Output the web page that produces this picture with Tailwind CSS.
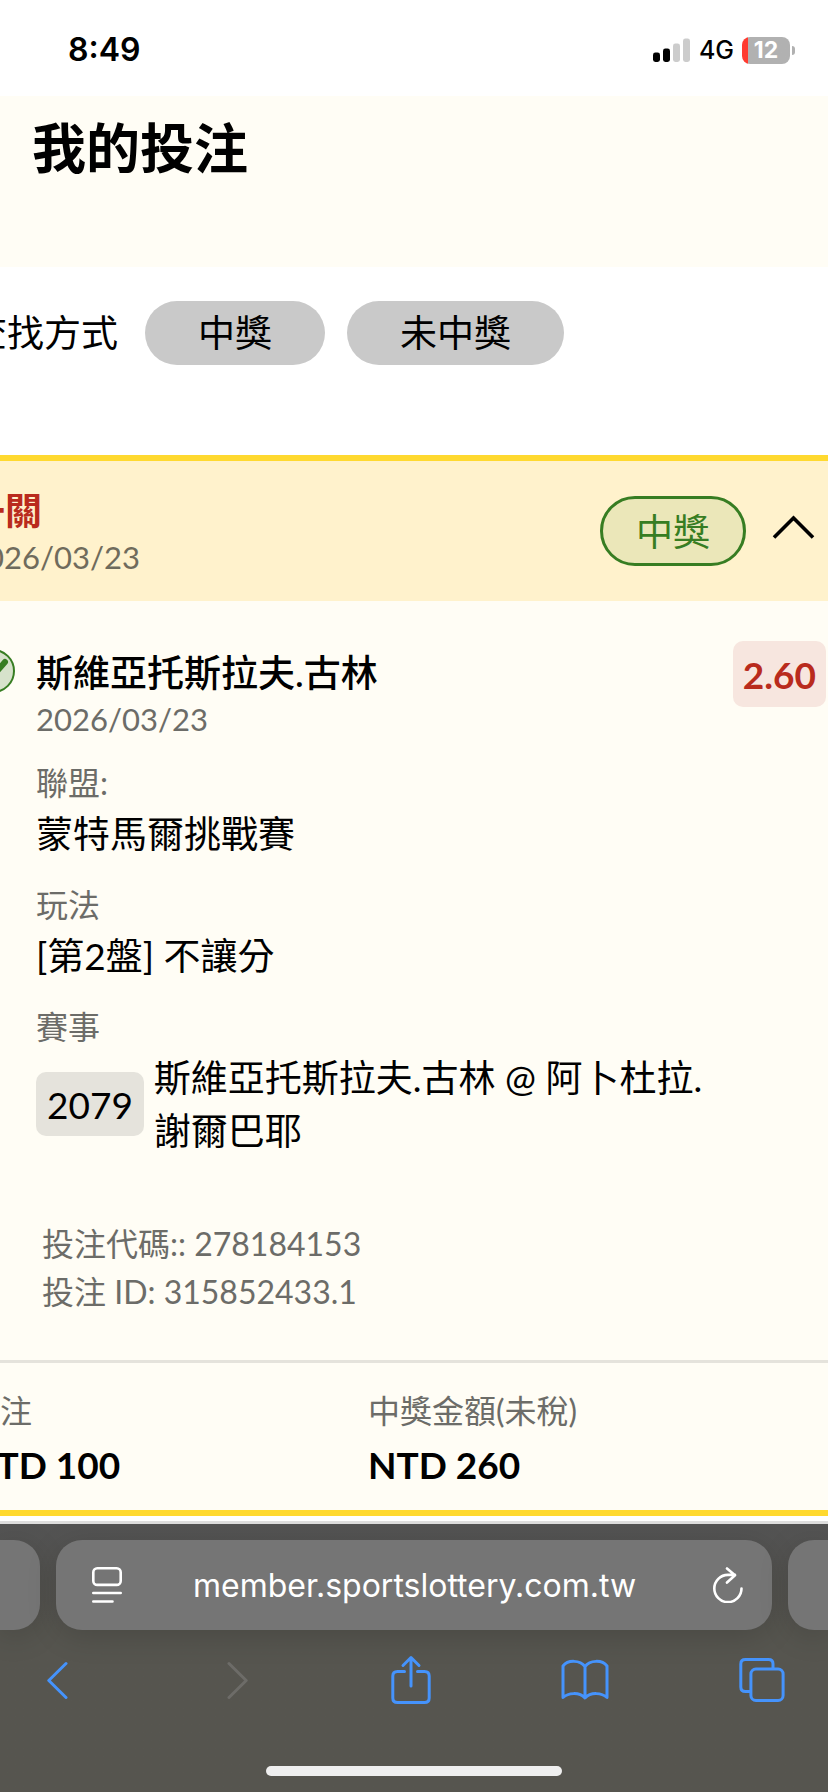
<!DOCTYPE html>
<html lang="zh-Hant">
<head>
    <meta charset="UTF-8">
    <meta name="viewport" content="width=device-width, initial-scale=1.0">
    <title>我的投注</title>
    <script src="https://cdn.jsdelivr.net/npm/@tailwindcss/browser@4"></script>
</head>
<body class="min-h-screen flex flex-col overflow-x-hidden bg-white text-black font-[Lato,'Noto_Sans_CJK_TC',sans-serif]">
    <!-- Status bar -->
    <div class="h-24 pl-[68px] pr-[33px] flex items-center justify-between font-[Inter,sans-serif]">
        <span class="text-[32px] leading-10 font-semibold pt-1">8:49</span>
        <div class="flex items-center gap-2 pt-1">
            <svg class="w-[38px] h-6" viewBox="0 0 38 24">
                <rect x="0" y="14.5" width="7" height="9.5" rx="2.4" fill="#000"/>
                <rect x="10" y="10.5" width="7" height="13.5" rx="2.4" fill="#000"/>
                <rect x="20" y="5.5" width="7" height="18.5" rx="2.4" fill="#ccc"/>
                <rect x="30" y="0.5" width="7" height="23.5" rx="2.4" fill="#ccc"/>
            </svg>
            <span class="text-[25px] leading-8 font-medium">4G</span>
            <div class="flex items-center gap-[2px]">
                <div class="w-12 h-[27px] rounded-[8px] bg-linear-to-r from-[#ff3b30] from-[6px] to-[#b1b1b1] to-[6px] flex items-center justify-center">
                    <span class="text-[23px] leading-[27px] font-bold text-white">12</span>
                </div>
                <div class="w-[3px] h-[9px] rounded-r-full bg-[#b1b1b1]"></div>
            </div>
        </div>
    </div>

    <header class="h-[171px] px-8 pt-[13px] bg-[#fffdf5]">
        <h1 class="text-[54px] leading-[80px] font-bold">我的投注</h1>
    </header>

    <!-- Filters -->
    <div class="-ml-[30px] h-[188px] pt-[34px] flex items-start text-[37px] leading-[64px]">
        <span class="mr-[27px] shrink-0">查找方式</span>
        <div class="flex gap-[22px]">
            <button class="h-16 px-[53px] rounded-full bg-[#c9c9c9]">中獎</button>
            <button class="h-16 px-[53px] rounded-full bg-[#c9c9c9]">未中獎</button>
        </div>
    </div>

    <!-- Bet slip -->
    <article class="-ml-8 border-y-[6px] border-[#ffd92f] bg-[#fffdf5] text-[37px] leading-[53px]">
        <div class="h-[140px] pr-[13px] flex items-center justify-between bg-[#fff2cc]">
            <div class="pt-[3px]">
                <h2 class="leading-[48px] font-bold text-[#b92b1d]">一關</h2>
                <p class="text-[31px] leading-[44px] text-[#6f6b5c]">2026/03/23</p>
            </div>
            <div class="flex items-center gap-[26px]">
                <span class="h-[70px] px-[33px] flex items-center rounded-full border-3 border-[#377d22] bg-[#ebe7b9] text-[#377d22]">中獎</span>
                <button aria-label="收合">
                    <svg class="w-[43px] h-6 mb-2" viewBox="0 0 43 24" fill="none" stroke="#000" stroke-width="3.6">
                        <path d="M2 22.5 21.5 3 41 22.5"/>
                    </svg>
                </button>
            </div>
        </div>

        <div class="pl-[3px] pr-[2px] pt-12 flex items-start">
            <svg class="w-11 h-11 mr-[21px] shrink-0" viewBox="0 0 44 44">
                <circle cx="22" cy="22" r="21" fill="#d7e2cb" stroke="#377d22" stroke-width="2"/>
                <path d="M12 23 20 29 34 13" fill="none" stroke="#377d22" stroke-width="6" stroke-linecap="round" stroke-linejoin="round"/>
            </svg>
            <div class="flex-1">
                <h3 class="leading-[48px] font-medium">斯維亞托斯拉夫.古林</h3>
                <p class="text-[31px] leading-[44px] text-[#6c6c68]">2026/03/23</p>
                <dl class="mt-[18px]">
                    <dt class="text-[32px] leading-[48px] text-[#6c6c68]">聯盟:</dt>
                    <dd class="mb-[21px]">蒙特馬爾挑戰賽</dd>
                    <dt class="text-[32px] leading-[48px] text-[#6c6c68]">玩法</dt>
                    <dd class="mb-[21px]">[第2盤] 不讓分</dd>
                    <dt class="text-[32px] leading-[48px] text-[#6c6c68]">賽事</dt>
                    <dd class="flex items-center gap-[10px]">
                        <span class="h-16 px-[11px] flex items-center rounded-[10px] bg-[#e5e3dc]">2079</span>
                        <span class="max-w-[560px]">斯維亞托斯拉夫.古林 @ 阿卜杜拉.謝爾巴耶</span>
                    </dd>
                </dl>
            </div>
            <span class="-mt-2 -ml-[94px] h-[66px] px-[10px] flex items-center rounded-[10px] bg-[#f7e6df] font-bold text-[#b92b1d]">2.60</span>
        </div>

        <div class="mt-[63px] mb-11 pl-[74px] text-[32px] leading-[48px] text-[#6c6c68]">
            <p>投注代碼:: 278184153</p>
            <p>投注 ID: 315852433.1</p>
        </div>

        <dl class="pt-[24px] pb-[19px] flex border-t-3 border-[#e5e3dc]">
            <div class="w-[400px]">
                <dt class="text-[32px] leading-[48px] text-[#6c6c68]">投注</dt>
                <dd class="mt-[3px] font-bold">NTD 100</dd>
            </div>
            <div>
                <dt class="text-[32px] leading-[48px] text-[#6c6c68]">中獎金額(未稅)</dt>
                <dd class="mt-[3px] font-bold">NTD 260</dd>
            </div>
        </dl>
    </article>

    <!-- Browser toolbar -->
    <footer class="mt-[5px] border-t-3 border-[#dedede] flex-1 flex flex-col bg-linear-to-b from-[#535353] to-[#56554f] to-40% font-[Inter,sans-serif]">
        <div class="mt-4 h-[90px] flex gap-4">
            <div class="w-10 rounded-r-[26px] bg-[#757575] shadow-[0_6px_30px_rgba(0,0,0,0.15)]"></div>
            <div class="flex-1 pl-9 pr-[29px] flex items-center rounded-[26px] bg-[#757575] shadow-[0_6px_30px_rgba(0,0,0,0.15)]">
                <button aria-label="網頁選單">
                    <svg class="w-[30px] h-9" viewBox="0 0 30 36" fill="none" stroke="#fff" stroke-width="2.6" stroke-linecap="round">
                        <rect x="1.3" y="1.3" width="27.4" height="16.6" rx="4"/>
                        <path d="M1.3 26H28.7M1.3 34.5H20.5"/>
                    </svg>
                </button>
                <input type="text" aria-label="網址" value="member.sportslottery.com.tw" class="flex-1 min-w-0 h-12 pr-[6px] text-center text-[32px] leading-10 text-white bg-transparent">
                <button aria-label="重新載入">
                    <svg class="w-[30px] h-9" viewBox="0 0 30 36" fill="none" stroke="#fff" stroke-width="2.6" stroke-linecap="round" stroke-linejoin="round">
                        <path d="M28.5 21.5A13.6 13.6 0 1 1 14.9 7.9H22M14 1.5 22 8.2 14 15.5"/>
                    </svg>
                </button>
            </div>
            <div class="w-10 rounded-l-[26px] bg-[#757575] shadow-[0_6px_30px_rgba(0,0,0,0.15)]"></div>
        </div>

        <nav class="mt-6 pl-[46px] pr-[43px] h-[52px] flex items-center justify-between text-[#4593fc]">
            <button aria-label="上一頁">
                <svg class="w-[22px] h-[38px]" viewBox="0 0 22 38" fill="none" stroke="currentColor" stroke-width="3" stroke-linecap="round" stroke-linejoin="round">
                    <path d="M20 2.5 2.8 19.5 20 36.5"/>
                </svg>
            </button>
            <button aria-label="下一頁" disabled class="text-[#6d6c68] ml-[29px]">
                <svg class="w-[22px] h-[38px]" viewBox="0 0 22 38" fill="none" stroke="currentColor" stroke-width="3" stroke-linecap="round" stroke-linejoin="round">
                    <path d="M2 2.5 19.2 19.5 2 36.5"/>
                </svg>
            </button>
            <button aria-label="分享" class="ml-[11px]">
                <svg class="w-[40px] h-[50px]" viewBox="0 0 40 50" fill="none" stroke="currentColor" stroke-width="3" stroke-linecap="round" stroke-linejoin="round">
                    <path d="M13.5 16.5H6.5Q1.8 16.5 1.8 21V43Q1.8 47.5 6.5 47.5H33.5Q38.2 47.5 38.2 43V21Q38.2 16.5 33.5 16.5H26.5M20 31V3M12 10.5 20 2.5 28 10.5"/>
                </svg>
            </button>
            <button aria-label="書籤">
                <svg class="w-[48px] h-[42px]" viewBox="0 0 48 42" fill="none" stroke="currentColor" stroke-width="3" stroke-linejoin="round">
                    <path d="M24 7.5C19 1 7 .5 2 7V38.5C7 34 18 32.5 24 39C30 32.5 41 34 46 38.5V7C41 .5 29 1 24 7.5ZM24 7.5V39"/>
                </svg>
            </button>
            <button aria-label="分頁">
                <svg class="w-[46px] h-[44px]" viewBox="0 0 46 44" fill="none" stroke="currentColor" stroke-width="3">
                    <rect x="11.9" y="11" width="32.2" height="31.4" rx="5"/>
                    <path d="M11 33.5H6.5Q1.8 33.5 1.8 29V6Q1.8 1.6 6.5 1.6H29.5Q34 1.6 34 6V10"/>
                </svg>
            </button>
        </nav>
        <div class="mt-auto mb-4 mx-auto w-[296px] h-[10px] rounded-full bg-[#efefef]"></div>
    </footer>
</body>
</html>
